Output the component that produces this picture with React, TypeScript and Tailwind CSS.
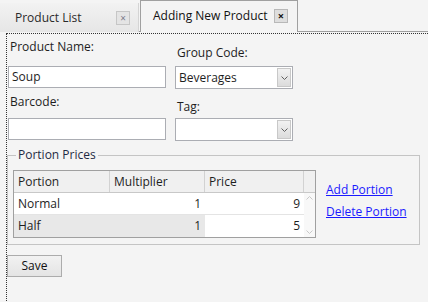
import React from "react";

const font = "font-['Open_Sans','Noto_Sans',sans-serif]";

function Chevron({ up = false }: { up?: boolean }) {
  return (
    <svg width="7" height="4" viewBox="0 0 7 4" className="block">
      <path d={up ? "M0.5 3.5 L3.5 0.5 L6.5 3.5" : "M0.5 0.5 L3.5 3.5 L6.5 0.5"} fill="none" stroke="currentColor" strokeWidth="1" />
    </svg>
  );
}

function Select({ value }: { value: string }) {
  return (
    <div className="flex h-[23px] w-[118px] items-center border border-[#abadb3] bg-white">
      <span className="flex-1 pl-[3px] text-[#1e1e1e]">{value}</span>
      <div className="mr-[1px] flex h-[19px] w-[14px] items-center justify-center border border-[#c8c8c8] bg-[linear-gradient(#f2f2f2,#dcdcdc)] text-[#606060]">
        <Chevron />
      </div>
    </div>
  );
}

function Input({ value }: { value: string }) {
  return (
    <div className="flex h-[22px] w-[158px] items-center border border-[#abadb3] bg-white pl-[3px] text-[#1e1e1e]">
      {value}
    </div>
  );
}

export default function App() {
  return (
    <div className={`relative h-[302px] w-[428px] overflow-hidden bg-[#f4f4f4] text-[12px] leading-[16px] text-[#1e1e1e] ${font}`}>
      {/* tab strip */}
      <div className="flex h-[32px] items-end border-b border-[#a0a0a0]">
        <div className="-mb-px flex h-[29px] w-[139px] items-center border-r border-[#d4d4d4] bg-[linear-gradient(#f2f2f2,#e6e6e6)] pl-[15px] pr-[8px]">
          <span className="flex-1 text-[#2a2a2a]">Product List</span>
          <span className="flex h-[14px] w-[14px] items-center justify-center border border-[#c6c6c6] bg-[#e4e4e4] text-[10px] leading-none text-[#7a7a8a]">×</span>
        </div>
        <div className="-mb-px ml-[1px] flex h-[32px] w-[158px] items-center border border-b-0 border-[#a0a0a0] bg-[#f4f4f4] pb-[2px] pl-[12px] pr-[9px]">
          <span className="flex-1 text-[#111]">Adding New Product</span>
          <span className="flex h-[14px] w-[14px] items-center justify-center border border-[#b8b8b8] bg-[#dedede] text-[11px] font-bold leading-none text-[#111]">×</span>
        </div>
      </div>

      {/* content */}
      <div className="ml-[6px] mt-[1px] h-[270px] border-l border-t border-dotted border-[#333]">
        <div className="flex pl-[1px] pt-[5px]">
          <div className="flex w-[158px] flex-col">
            <span className="ml-[2px] h-[16px]">Product Name:</span>
            <div className="mt-[11px]">
              <Input value="Soup" />
            </div>
            <span className="ml-[2px] mt-[6px] h-[16px]">Barcode:</span>
            <div className="mt-[8px]">
              <Input value="" />
            </div>
          </div>
          <div className="ml-[9px] flex flex-col">
            <span className="ml-[2px] mt-[6px] h-[16px]">Group Code:</span>
            <div className="mt-[5px]">
              <Select value="Beverages" />
            </div>
            <span className="ml-[2px] mt-[10px] h-[16px]">Tag:</span>
            <div className="mt-[3px]">
              <Select value="" />
            </div>
          </div>
        </div>

        {/* group box */}
        <div className="relative ml-0 mt-[14px] h-[90px] w-[413px] border border-[#c4c4c4]">
          <span className="absolute -top-[9px] left-[8px] bg-[#f4f4f4] px-[2px] text-[#1f2a44]">Portion Prices</span>
          <div className="ml-[5px] mt-[14px] flex items-start">
            <div className="w-[303px] border border-[#a0a0a0] bg-white">
              <div className="flex h-[22px] items-center border-b border-[#c8c8c8] bg-[#f0f0f0]">
                <div className="h-full w-[96px] border-r border-[#d2d2d2] pl-[4px] leading-[22px]">Portion</div>
                <div className="h-full w-[95px] border-r border-[#d2d2d2] pl-[4px] leading-[22px]">Multiplier</div>
                <div className="h-full w-[99px] border-r border-[#d2d2d2] pl-[4px] leading-[22px]">Price</div>
                <div className="h-full flex-1" />
              </div>
              <div className="flex">
                <div className="w-[290px]">
                  <div className="flex h-[22px] border-b border-[#e4e4e4]">
                    <div className="w-[96px] pl-[4px] leading-[22px]">Normal</div>
                    <div className="w-[95px] pr-[4px] text-right leading-[22px]">1</div>
                    <div className="w-[99px] pr-[4px] text-right leading-[22px]">9</div>
                  </div>
                  <div className="flex h-[22px]">
                    <div className="w-[96px] bg-[#e8e8e8] pl-[4px] leading-[22px]">Half</div>
                    <div className="w-[95px] bg-[#e8e8e8] pr-[4px] text-right leading-[22px]">1</div>
                    <div className="w-[99px] pr-[4px] text-right leading-[22px]">5</div>
                  </div>
                </div>
                <div className="flex flex-1 flex-col items-center justify-between bg-[#f8f8f8] py-[3px] text-[#c8c8c8]">
                  <Chevron up />
                  <Chevron />
                </div>
              </div>
            </div>
            <div className="ml-[10px] mt-[12px] flex flex-col gap-[6px]">
              <a className="cursor-pointer text-[#1a1aff] underline">Add Portion</a>
              <a className="cursor-pointer text-[#1a1aff] underline">Delete Portion</a>
            </div>
          </div>
        </div>

        <button className="mt-[10px] flex h-[22px] w-[55px] items-center justify-center border border-[#acacac] bg-[linear-gradient(#f2f2f2,#e4e4e4)] text-[#111]">
          Save
        </button>
      </div>
    </div>
  );
}
